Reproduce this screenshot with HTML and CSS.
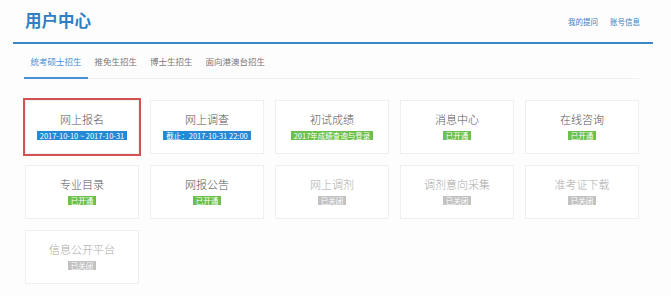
FILE: index.html
```html
<!DOCTYPE html>
<html lang="zh-CN">
<head>
  <meta charset="UTF-8" />
  <title>用户中心</title>
  <link rel="stylesheet" href="styles.css">
</head>
<body>
  <div class="page">
    <div class="header">
      <h1>用户中心</h1>
      <div class="links">
        <a href="#">我的提问</a>
        <a href="#">账号信息</a>
      </div>
    </div>

    <div class="content">
      <div class="tabs">
        <span class="tab active">统考硕士招生</span>
        <span class="tab">推免生招生</span>
        <span class="tab">博士生招生</span>
        <span class="tab">面向港澳台招生</span>
      </div>

      <div class="grid">
        <div class="card selected">
          <div class="name">网上报名</div>
          <span class="badge blue">2017-10-10 ~ 2017-10-31</span>
        </div>
        <div class="card">
          <div class="name">网上调查</div>
          <span class="badge blue">截止：2017-10-31 22:00</span>
        </div>
        <div class="card">
          <div class="name">初试成绩</div>
          <span class="badge green">2017年成绩查询与登录</span>
        </div>
        <div class="card">
          <div class="name">消息中心</div>
          <span class="badge green">已开通</span>
        </div>
        <div class="card">
          <div class="name">在线咨询</div>
          <span class="badge green">已开通</span>
        </div>

        <div class="card">
          <div class="name">专业目录</div>
          <span class="badge green">已开通</span>
        </div>
        <div class="card">
          <div class="name">网报公告</div>
          <span class="badge green">已开通</span>
        </div>
        <div class="card off">
          <div class="name">网上调剂</div>
          <span class="badge gray">已关闭</span>
        </div>
        <div class="card off">
          <div class="name">调剂意向采集</div>
          <span class="badge gray">已关闭</span>
        </div>
        <div class="card off">
          <div class="name">准考证下载</div>
          <span class="badge gray">已关闭</span>
        </div>

        <div class="card off">
          <div class="name">信息公开平台</div>
          <span class="badge gray">已关闭</span>
        </div>
      </div>
    </div>
  </div>
</body>
</html>
```

FILE: styles.css
```css
body {
  margin: 0;
  background: #fdfdfd;
  font-family: "Noto Sans CJK SC", "Noto Sans", sans-serif;
  color: #555;
}
.page {
  width: 640px;
  margin-left: 13px;
}
.header {
  display: flex;
  justify-content: space-between;
  align-items: center;
  height: 42px;
  padding: 0 13px 0 12px;
  border-bottom: 2px solid #3a86c6;
}
.header h1 {
  margin: 0;
  font-size: 16.5px;
  font-weight: bold;
  color: #2f7fc4;
  line-height: 1;
  padding-bottom: 1px;
}
.links {
  display: flex;
  gap: 12px;
}
.links a {
  font-size: 7.5px;
  color: #3b7cc0;
  text-decoration: none;
}
.content {
  padding: 0 14px 0 11px;
}
.tabs {
  display: flex;
  height: 34px;
  align-items: flex-end;
  border-bottom: 1px solid #f0f0f0;
}
.tab {
  font-size: 8.5px;
  line-height: 10px;
  color: #777;
  padding: 0 6.5px 11px;
  border-bottom: 2px solid transparent;
  margin-bottom: -1px;
}
.tab.active {
  color: #4a8fcf;
  border-bottom-color: #4a8fcf;
}
.grid {
  display: grid;
  grid-template-columns: repeat(5, 114px);
  grid-auto-rows: 54px;
  gap: 11px;
  margin: 21px 0 0 1px;
}
.card {
  background: #fff;
  border: 1px solid #efefef;
  display: flex;
  flex-direction: column;
  align-items: center;
  padding-top: 12px;
  box-sizing: border-box;
}
.card.selected {
  outline: 2px solid #d25353;
  outline-offset: 0;
}
.name {
  font-size: 11px;
  line-height: 13px;
  font-weight: 300;
  color: #555;
  margin-bottom: 5px;
}
.off .name {
  color: #aaa;
}
.badge {
  font-size: 7.5px;
  line-height: 9px;
  padding: 0 3px;
  color: #fff;
  white-space: nowrap;
}
.blue { background: #2589d6; }
.green { background: #6cc14c; }
.gray { background: #c2c2c2; }
```
